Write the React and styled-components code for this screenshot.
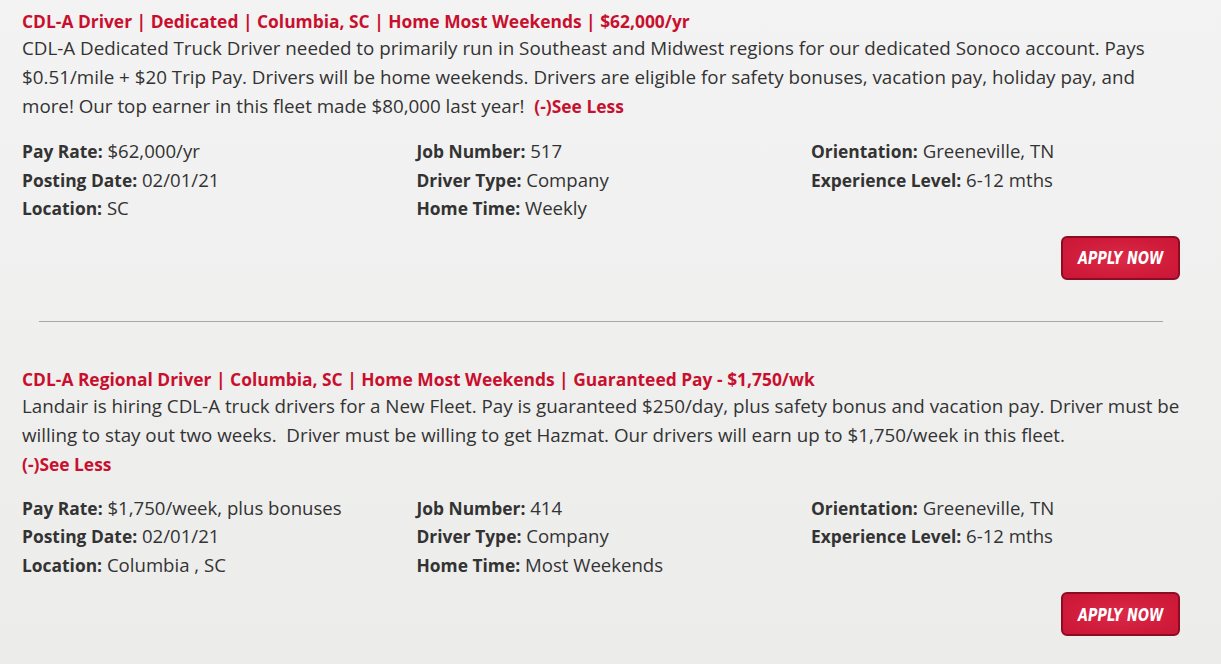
import React from "react";
import styled, { createGlobalStyle } from "styled-components";

const jobs = [
  {
    id: 517,
    title: "CDL-A Driver | Dedicated | Columbia, SC | Home Most Weekends | $62,000/yr",
    description:
      "CDL-A Dedicated Truck Driver needed to primarily run in Southeast and Midwest regions for our dedicated Sonoco account. Pays $0.51/mile + $20 Trip Pay. Drivers will be home weekends. Drivers are eligible for safety bonuses, vacation pay, holiday pay, and more! Our top earner in this fleet made $80,000 last year!",
    seeLessOnNewLine: false,
    columns: [
      [
        ["Pay Rate", "$62,000/yr"],
        ["Posting Date", "02/01/21"],
        ["Location", "SC"],
      ],
      [
        ["Job Number", "517"],
        ["Driver Type", "Company"],
        ["Home Time", "Weekly"],
      ],
      [
        ["Orientation", "Greeneville, TN"],
        ["Experience Level", "6-12 mths"],
      ],
    ],
  },
  {
    id: 414,
    title:
      "CDL-A Regional Driver | Columbia, SC | Home Most Weekends | Guaranteed Pay - $1,750/wk",
    description:
      "Landair is hiring CDL-A truck drivers for a New Fleet. Pay is guaranteed $250/day, plus safety bonus and vacation pay. Driver must be willing to stay out two weeks.\u00a0 Driver must be willing to get Hazmat. Our drivers will earn up to $1,750/week in this fleet.",
    seeLessOnNewLine: true,
    columns: [
      [
        ["Pay Rate", "$1,750/week, plus bonuses"],
        ["Posting Date", "02/01/21"],
        ["Location", "Columbia , SC"],
      ],
      [
        ["Job Number", "414"],
        ["Driver Type", "Company"],
        ["Home Time", "Most Weekends"],
      ],
      [
        ["Orientation", "Greeneville, TN"],
        ["Experience Level", "6-12 mths"],
      ],
    ],
  },
];

function App() {
  return (
    <>
      <GlobalStyle />
      <Page>
        {jobs.map((job, i) => (
          <React.Fragment key={job.id}>
            {i > 0 && <Divider />}
            <Job>
              <Title>{job.title}</Title>
              <Description>
                {job.description}
                <SeeLess href="#" $block={job.seeLessOnNewLine}>
                  (-)See Less
                </SeeLess>
              </Description>
              <Details>
                {job.columns.map((col, c) => (
                  <Column key={c}>
                    {col.map(([label, value]) => (
                      <Field key={label}>
                        <Label>{label}:</Label> {value}
                      </Field>
                    ))}
                  </Column>
                ))}
              </Details>
              <Actions>
                <ApplyButton>
                  <ButtonLabel>Apply Now</ButtonLabel>
                </ApplyButton>
              </Actions>
            </Job>
          </React.Fragment>
        ))}
      </Page>
    </>
  );
}

const GlobalStyle = createGlobalStyle`
  html, body {
    margin: 0;
    padding: 0;
  }
  body {
    background: linear-gradient(180deg, #f3f3f3 0%, #ececeb 100%);
    min-height: 664px;
    font-family: "Open Sans", "Noto Sans", sans-serif;
  }
`;

const Page = styled.div`
  padding: 8px 16px 0 22px;
  color: #333;
`;

const Job = styled.div`
  display: flex;
  flex-direction: column;
`;

const Title = styled.h2`
  margin: 0;
  font-size: 17.4px;
  line-height: 26px;
  font-weight: 700;
  color: #c8102e;
`;

const Description = styled.p`
  max-width: 1163px;
  margin: 0;
  font-size: 18.8px;
  line-height: 29px;
  color: #333;
`;

const SeeLess = styled.a`
  display: ${({ $block }) => ($block ? "block" : "inline")};
  margin-left: ${({ $block }) => ($block ? "0" : "10px")};
  font-size: 17.4px;
  line-height: 28px;
  color: #c8102e;
  font-weight: 700;
  text-decoration: none;
`;

const Details = styled.div`
  display: grid;
  grid-template-columns: repeat(3, 394.5px);
  margin-top: 16px;
`;

const Column = styled.div`
  display: flex;
  flex-direction: column;
`;

const Field = styled.div`
  font-size: 18.6px;
  line-height: 28.5px;
`;

const Label = styled.strong`
  font-size: 17.4px;
  font-weight: 700;
`;

const Actions = styled.div`
  display: flex;
  justify-content: flex-end;
  padding-right: 25px;
  margin-top: 13px;
`;

const ApplyButton = styled.button`
  display: flex;
  align-items: center;
  justify-content: center;
  width: 119px;
  height: 44px;
  padding: 0;
  border: 2px solid #8e0b22;
  border-radius: 6px;
  background: radial-gradient(ellipse at center, #dc2a48 0%, #cf1a3a 70%, #c9173a 100%);
  color: #fff;
  cursor: pointer;
`;

const ButtonLabel = styled.span`
  display: inline-block;
  font-family: "DejaVu Sans Condensed", "DejaVu Sans", sans-serif;
  font-stretch: condensed;
  font-style: italic;
  font-weight: 700;
  font-size: 18.5px;
  text-transform: uppercase;
  white-space: nowrap;
  transform: scaleX(0.78);
`;

const Divider = styled.hr`
  margin: 41px 42px 44px 17px;
  border: 0;
  border-top: 1px solid #a8a8a8;
`;

export default App;
